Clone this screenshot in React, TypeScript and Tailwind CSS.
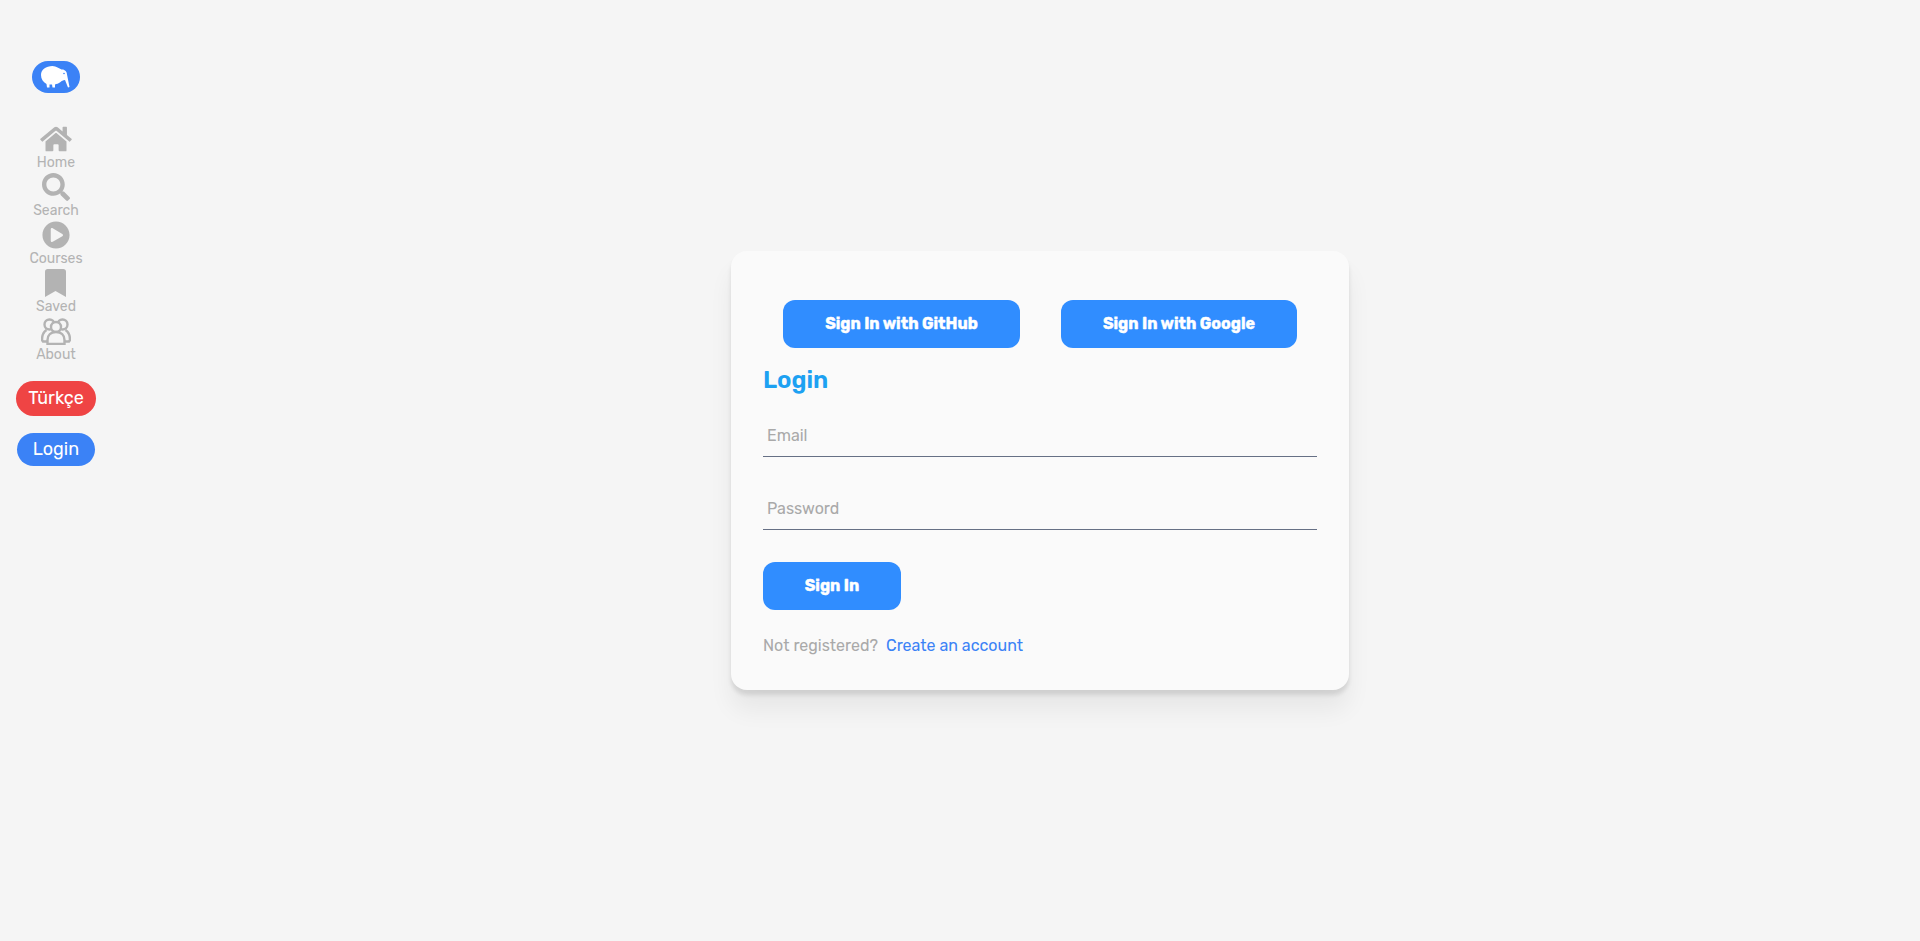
import React from "react";
import { FaBookmark, FaHome, FaPlayCircle, FaSearch } from "react-icons/fa";

const rubik = "font-['Rubik','Roboto','Liberation_Sans',sans-serif]";

function KiwiLogo() {
  return (
    <svg viewBox="0 0 30 22" className="h-[22px] w-[30px]" aria-hidden="true">
      <path
        d="M0 9C0 3.500 5 0 11.500 0c4 0 6.500 2.500 9 3.500 3-.5 5.500 2 5.500 5l2.500 12.500-1.500.5L24 14c-2 0-3.500 1-4.500 2-2 1.500-4 2-5.500 2.500v3h-2.500l-.5-3H8.500v3H6L5.500 18C2 16 0 13 0 9z"
        fill="#fff"
      />
      <circle cx="23" cy="7.500" r="0.8" fill="#3b82f6" />
    </svg>
  );
}

function PeopleIcon() {
  return (
    <svg
      viewBox="0 0 30 28"
      className="h-[28px] w-[30px]"
      fill="none"
      stroke="#b3b3b3"
      strokeWidth="2.400"
      aria-hidden="true"
    >
      <circle cx="8.500" cy="7.500" r="5" />
      <circle cx="21.500" cy="7.500" r="5" />
      <path d="M5.500 13C2.500 15 1 18 1 23l1 1.500h5" />
      <path d="M24.500 13c3 2 4.500 5 4.500 10l-1 1.500h-5" />
      <circle cx="15" cy="10" r="5" fill="#f5f5f5" />
      <path d="M6.500 27v-4c0-5 3.500-8 8.500-8s8.500 3 8.500 8v4z" fill="#f5f5f5" />
    </svg>
  );
}

const navItems = [
  { label: "Home", icon: <FaHome className="h-[28px] w-[32px] text-[#b3b3b3]" /> },
  { label: "Search", icon: <FaSearch className="h-[28px] w-[28px] text-[#b3b3b3]" /> },
  { label: "Courses", icon: <FaPlayCircle className="h-[28px] w-[28px] text-[#b3b3b3]" /> },
  { label: "Saved", icon: <FaBookmark className="h-[28px] w-[21px] text-[#b3b3b3]" /> },
  { label: "About", icon: <PeopleIcon /> },
];

function Sidebar() {
  return (
    <aside className="flex w-[160px] shrink-0 flex-col">
      <div className="flex w-[112px] flex-col items-center pt-[61px]">
        <div className="flex h-[32px] w-[48px] items-center justify-center rounded-full bg-[#3b82f6]">
          <KiwiLogo />
        </div>
        <nav className="mt-[32px] flex flex-col items-center">
          {navItems.map((item) => (
            <a key={item.label} href="#" className="flex h-[48px] flex-col items-center">
              {item.icon}
              <span className="text-[14px] leading-[20px] text-[#b3b3b3]">{item.label}</span>
            </a>
          ))}
        </nav>
        <button
          type="button"
          className="mt-[16px] h-[35px] w-[80px] rounded-full bg-[#ef4444] text-[18px] text-white"
        >
          Türkçe
        </button>
        <button
          type="button"
          className="mt-[17px] h-[33px] w-[78px] rounded-full bg-[#3b82f6] text-[18px] text-white"
        >
          Login
        </button>
      </div>
    </aside>
  );
}

function BlueButton({ label, className }: { label: string; className: string }) {
  return (
    <button
      type="button"
      className={`h-[48px] rounded-[12px] bg-[#308dff] text-[16px] font-bold text-white [-webkit-text-stroke:0.4px_white] ${className}`}
    >
      {label}
    </button>
  );
}

function Field({ placeholder, type }: { placeholder: string; type: string }) {
  return (
    <input
      type={type}
      placeholder={placeholder}
      className="h-[42px] w-full border-b border-[#667085] bg-transparent px-[4px] text-[16px] outline-none placeholder:text-[#a9a9a9]"
    />
  );
}

export default function App() {
  return (
    <div className={`flex min-h-screen bg-[#f5f5f5] ${rubik}`}>
      <Sidebar />
      <main className="flex flex-1 items-center justify-center">
        <div className="h-[439px] w-[618px] rounded-[16px] bg-[#fafafa] px-[32px] pt-[49px] shadow-[0_20px_25px_0_rgba(0,0,0,0.06),0_5px_4px_0_rgba(0,0,0,0.1)]">
          <div className="flex justify-between pr-[20px] pl-[20px]">
            <BlueButton label="Sign In with GitHub" className="w-[237px]" />
            <BlueButton label="Sign In with Google" className="w-[236px]" />
          </div>
          <h2 className="mt-[16px] text-[24px] leading-[32px] font-semibold text-[#1da1f2]">Login</h2>
          <div className="mt-[19px] flex flex-col gap-[31px]">
            <Field placeholder="Email" type="email" />
            <Field placeholder="Password" type="password" />
          </div>
          <BlueButton label="Sign In" className="mt-[32px] block w-[138px]" />
          <p className="mt-[24px] text-[16px] leading-[24px] text-[#a9a9a9]">
            Not registered?
            <a href="#" className="ml-[8px] text-[#3b82f6]">
              Create an account
            </a>
          </p>
        </div>
      </main>
    </div>
  );
}
